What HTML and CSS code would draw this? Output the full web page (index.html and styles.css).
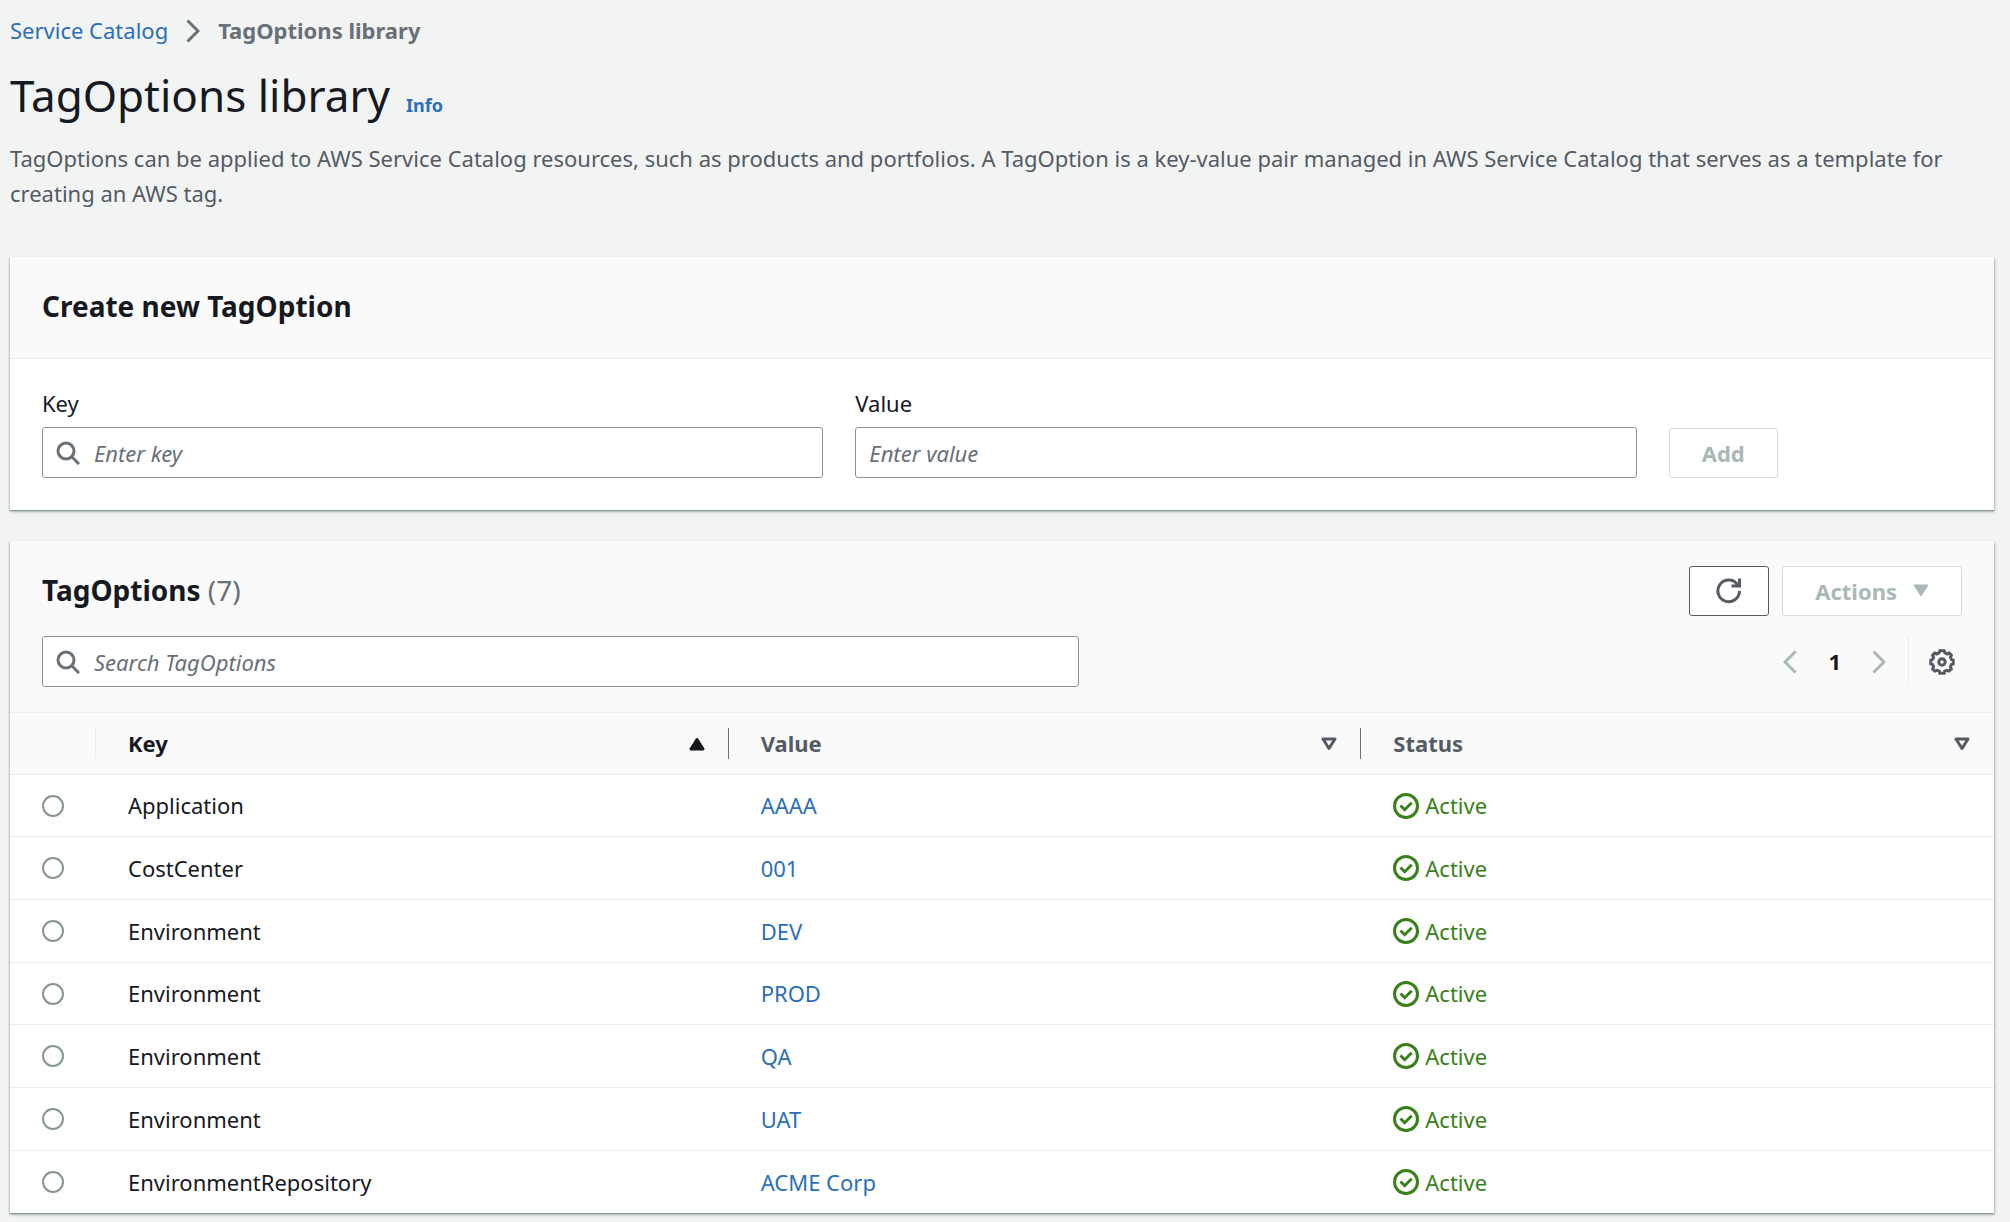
FILE: index.html
```
<!DOCTYPE html>
<html lang="en">
<head>
    <meta charset="UTF-8">
    <meta name="viewport" content="width=device-width, initial-scale=1.0">
    <title>TagOptions library</title>
    <link rel="stylesheet" href="styles.css">
</head>
<body>
    <svg class="sprite" aria-hidden="true">
        <symbol id="search" viewBox="0 0 24 24">
            <circle cx="10" cy="10" r="8"></circle>
            <path d="M15.5 15.5L23 23"></path>
        </symbol>
        <symbol id="check" viewBox="0 0 26 26">
            <circle cx="13" cy="13" r="11.5"></circle>
            <path d="M7.5 12.5L11.7 16.7L18.7 9.7"></path>
        </symbol>
        <symbol id="sort" viewBox="0 0 16 14">
            <path d="M2 2H14L8 11.5Z"></path>
        </symbol>
    </svg>

    <nav class="breadcrumb" aria-label="Breadcrumb">
        <a href="#">Service Catalog</a>
        <svg class="breadcrumb__arrow" viewBox="0 0 14 24"><path d="M1.5 1.5L12 12L1.5 22.5"></path></svg>
        <span>TagOptions library</span>
    </nav>

    <header class="intro">
        <div class="intro__title">
            <h1>TagOptions library</h1>
            <a href="#">Info</a>
        </div>
        <p>TagOptions can be applied to AWS Service Catalog resources, such as products and portfolios. A TagOption is a key-value pair managed in AWS Service Catalog that serves as a template for creating an AWS tag.</p>
    </header>

    <section class="card">
        <div class="card__header">
            <h2>Create new TagOption</h2>
        </div>
        <form class="form">
            <div class="field">
                <label for="key">Key</label>
                <div class="search">
                    <svg class="search__icon"><use href="#search"></use></svg>
                    <input id="key" class="input" type="text" placeholder="Enter key">
                </div>
            </div>
            <div class="field">
                <label for="value">Value</label>
                <input id="value" class="input" type="text" placeholder="Enter value">
            </div>
            <div class="form__action">
                <button class="btn" type="button" disabled>Add</button>
            </div>
        </form>
    </section>

    <section class="card">
        <div class="toolbar">
            <div class="toolbar__row">
                <h2>TagOptions <span class="count">(7)</span></h2>
                <div class="toolbar__btns">
                    <button class="btn" type="button" aria-label="Refresh">
                        <svg class="refresh" viewBox="0 0 26 26"><path d="M23.5 13A10.8 10.8 0 1 1 21.5 6.6M23.5 0.5V8H15.5"></path></svg>
                    </button>
                    <button class="btn" type="button" disabled>
                        Actions
                        <svg class="caret" viewBox="0 0 16 14"><path d="M1 1H15L8 12Z"></path></svg>
                    </button>
                </div>
            </div>
            <div class="toolbar__row">
                <div class="search search--table">
                    <svg class="search__icon"><use href="#search"></use></svg>
                    <input class="input" type="text" placeholder="Search TagOptions" aria-label="Search TagOptions">
                </div>
                <div class="pages">
                    <button class="pages__btn" type="button" aria-label="Previous page" disabled>
                        <svg class="pages__arrow" viewBox="0 0 14 24"><path d="M12.5 1.5L2 12L12.5 22.5"></path></svg>
                    </button>
                    <button class="pages__btn pages__num" type="button">1</button>
                    <button class="pages__btn" type="button" aria-label="Next page" disabled>
                        <svg class="pages__arrow" viewBox="0 0 14 24"><path d="M1.5 1.5L12 12L1.5 22.5"></path></svg>
                    </button>
                    <div class="settings">
                        <button class="pages__btn" type="button" aria-label="Preferences">
                            <svg class="gear" viewBox="0 0 26 26">
                                <path d="M10.8 1.8H15.2L16 4L18.3 5L20.4 4.1L22.4 6.2L21.5 8.3L22.3 10.4L24.2 11V15L22.3 15.6L21.4 17.8L22.3 20L20 22.1L17.8 21.4L15.8 22.2L15.2 24.2H10.8L10.2 22.2L8.2 21.4L6 22.1L3.7 20L4.6 17.8L3.7 15.6L1.8 15V11L3.7 10.4L4.5 8.3L3.6 6.2L5.6 4.1L7.7 5L10 4Z"></path>
                                <circle cx="13" cy="13" r="3.2"></circle>
                            </svg>
                        </button>
                    </div>
                </div>
            </div>
        </div>
        <table class="table">
            <colgroup>
                <col class="table__select">
                <col>
                <col>
                <col>
            </colgroup>
            <thead>
                <tr>
                    <th><div class="th"></div></th>
                    <th class="sorted"><div class="th">Key <svg class="sort sort--asc"><use href="#sort"></use></svg></div></th>
                    <th><div class="th">Value <svg class="sort"><use href="#sort"></use></svg></div></th>
                    <th><div class="th">Status <svg class="sort"><use href="#sort"></use></svg></div></th>
                </tr>
            </thead>
            <tbody>
                <tr>
                    <td><input type="radio" name="tag" aria-label="Application AAAA"></td>
                    <td>Application</td>
                    <td><a href="#">AAAA</a></td>
                    <td><div class="status"><svg><use href="#check"></use></svg>Active</div></td>
                </tr>
                <tr>
                    <td><input type="radio" name="tag" aria-label="CostCenter 001"></td>
                    <td>CostCenter</td>
                    <td><a href="#">001</a></td>
                    <td><div class="status"><svg><use href="#check"></use></svg>Active</div></td>
                </tr>
                <tr>
                    <td><input type="radio" name="tag" aria-label="Environment DEV"></td>
                    <td>Environment</td>
                    <td><a href="#">DEV</a></td>
                    <td><div class="status"><svg><use href="#check"></use></svg>Active</div></td>
                </tr>
                <tr>
                    <td><input type="radio" name="tag" aria-label="Environment PROD"></td>
                    <td>Environment</td>
                    <td><a href="#">PROD</a></td>
                    <td><div class="status"><svg><use href="#check"></use></svg>Active</div></td>
                </tr>
                <tr>
                    <td><input type="radio" name="tag" aria-label="Environment QA"></td>
                    <td>Environment</td>
                    <td><a href="#">QA</a></td>
                    <td><div class="status"><svg><use href="#check"></use></svg>Active</div></td>
                </tr>
                <tr>
                    <td><input type="radio" name="tag" aria-label="Environment UAT"></td>
                    <td>Environment</td>
                    <td><a href="#">UAT</a></td>
                    <td><div class="status"><svg><use href="#check"></use></svg>Active</div></td>
                </tr>
                <tr>
                    <td><input type="radio" name="tag" aria-label="EnvironmentRepository ACME Corp"></td>
                    <td>EnvironmentRepository</td>
                    <td><a href="#">ACME Corp</a></td>
                    <td><div class="status"><svg><use href="#check"></use></svg>Active</div></td>
                </tr>
            </tbody>
        </table>
    </section>
</body>
</html>
```
FILE: styles.css
```
* {
    box-sizing: border-box;
}
body {
    margin: 0;
    padding: 13px 16px 6px 10px;
    background-color: #f2f3f3;
    color: #16191f;
    font-family: "Noto Sans", "Open Sans", sans-serif;
    font-size: 22px;
    line-height: 35px;
}
h1, h2, p {
    margin: 0;
}
a {
    color: #2a6fba;
    text-decoration: none;
}
svg {
    flex: none;
    fill: none;
    stroke: currentColor;
    stroke-width: 3;
}
.sprite {
    display: none;
}
.breadcrumb {
    display: flex;
    align-items: center;
    gap: 18px;
    color: #687078;
}
.breadcrumb span {
    font-weight: bold;
}
.breadcrumb__arrow {
    width: 14px;
    height: 24px;
}
.intro {
    margin-bottom: 46px;
    padding-top: 20px;
}
.intro__title {
    display: flex;
    align-items: baseline;
    gap: 16px;
    margin-bottom: 18px;
}
.intro__title a {
    font-size: 18px;
    font-weight: bold;
}
h1 {
    font-size: 44px;
    font-weight: normal;
    line-height: 54px;
}
.intro p {
    color: #545b64;
}
h2 {
    padding-bottom: 2px;
    font-size: 28px;
    line-height: 34px;
}
.count {
    color: #687078;
    font-weight: normal;
}
.card {
    background-color: #fff;
    box-shadow: 0 1px 1px 0 #8b979a, 1px 2px 3px 0 #b9c1c3, -1px 1px 2px 0 #c9d0d0;
}
.card + .card {
    margin-top: 31px;
}
.card__header {
    padding: 32px 32px 33px;
    border-bottom: 1px solid #eaeded;
    background-color: #fafafa;
}
.form {
    display: grid;
    grid-template-columns: repeat(12, 1fr);
    column-gap: 32px;
    padding: 27px 32px 32px;
}
.field {
    grid-column: span 5;
}
.field label {
    display: block;
    margin-bottom: 6px;
}
.form__action {
    display: flex;
    align-items: flex-end;
    grid-column: span 2;
}
.search {
    display: grid;
    align-items: center;
}
/* icon and text box share one grid cell */
.search > * {
    grid-area: 1 / 1;
}
.search__icon {
    z-index: 1;
    width: 24px;
    height: 24px;
    margin-left: 14px;
    color: #687078;
}
.input {
    display: block;
    width: 100%;
    height: 51px;
    padding: 0 13px;
    border: 1px solid #879596;
    border-radius: 3px;
    background-color: #fff;
    font: inherit;
}
.input::placeholder {
    color: #687078;
    font-style: italic;
    opacity: 1;
}
.search .input {
    padding-left: 51px;
}
.search--table {
    width: 54%;
}
.btn {
    display: flex;
    align-items: center;
    gap: 16px;
    height: 50px;
    padding: 0 32px;
    border: 1px solid #545b64;
    border-radius: 3px;
    background-color: #fff;
    color: #545b64;
    font: inherit;
    font-weight: bold;
}
.btn:disabled {
    border-color: #d5dbdb;
    color: #aab7b8;
}
.refresh {
    width: 26px;
    height: 26px;
    margin: 0 -6px;
}
.caret {
    width: 16px;
    height: 14px;
    fill: currentColor;
    stroke-width: 1;
}
.toolbar {
    display: flex;
    flex-direction: column;
    gap: 20px;
    padding: 25px 32px;
    border-bottom: 1px solid #eaeded;
    background-color: #fafafa;
}
.toolbar__row {
    display: flex;
    align-items: center;
    justify-content: space-between;
}
.toolbar__btns {
    display: flex;
    gap: 13px;
}
.pages {
    display: flex;
    align-items: center;
}
.pages__btn {
    display: flex;
    padding: 0;
    border: 0;
    background: none;
    color: #545b64;
    font: inherit;
}
.pages__btn:disabled {
    color: #aab7b8;
}
.pages__num {
    padding: 0 31px;
    color: #16191f;
    font-weight: bold;
}
.pages__arrow {
    width: 14px;
    height: 24px;
}
.settings {
    display: flex;
    align-items: center;
    height: 49px;
    margin-left: 22px;
    padding: 0 7px 0 20px;
    border-left: 1px solid #eaeded;
}
.gear {
    width: 26px;
    height: 26px;
}
.table {
    width: 100%;
    border-spacing: 0;
    table-layout: fixed;
}
.table__select {
    width: 86px;
}
th, td {
    height: 63px;
    padding: 0 0 0 32px;
    border-bottom: 1px solid #eaeded;
    text-align: left;
}
th {
    height: 62px;
    background-color: #fafafa;
    color: #545b64;
}
tbody tr:nth-child(3n + 1) td {
    height: 62px;
}
tbody tr:last-child td {
    border-bottom: 0;
}
.th {
    display: flex;
    align-items: center;
    justify-content: space-between;
    height: 31px;
    padding-right: 23px;
    border-right: 1px solid #687078;
}
th:first-child .th {
    border-color: #eaeded;
}
th:last-child .th {
    border-color: transparent;
}
.sorted {
    color: #16191f;
}
.sort {
    width: 16px;
    height: 14px;
    stroke-linejoin: round;
}
.sort--asc {
    fill: currentColor;
    transform: rotate(180deg);
}
td input {
    display: block;
    width: 22px;
    height: 22px;
    margin: 0;
    border: 2px solid #879596;
    border-radius: 50%;
    background-color: #fff;
    appearance: none;
}
td input:checked {
    border: 6px solid #0073bb;
}
.status {
    display: flex;
    align-items: center;
    gap: 6px;
    color: #388019;
}
.status svg {
    width: 26px;
    height: 26px;
}
```
